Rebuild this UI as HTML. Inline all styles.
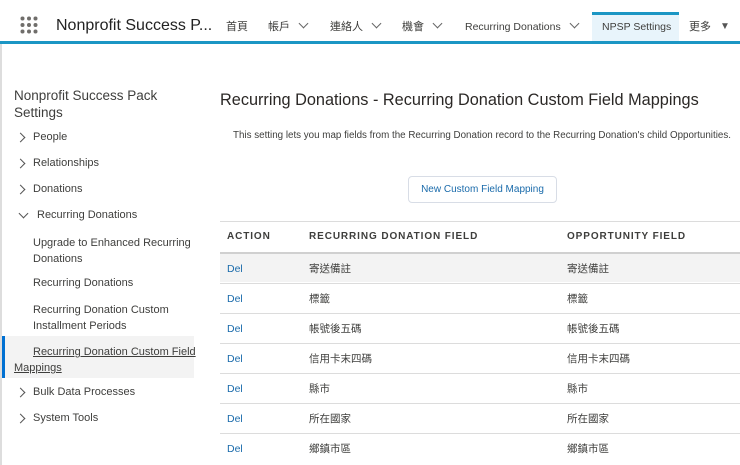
<!DOCTYPE html>
<html><head><meta charset="utf-8"><style>
*{margin:0;padding:0;box-sizing:border-box}
body{width:740px;height:465px;overflow:hidden;background:#fff;font-family:"Liberation Sans","Noto Sans CJK TC",sans-serif;color:#3e3e3c;position:relative}
.abs{position:absolute;white-space:nowrap}
.nav{position:absolute;left:0;top:0;width:740px;height:42px;background:#fff}
.bar{position:absolute;left:0;top:41px;width:740px;height:3px;background:#1b96c4}
.nv{position:absolute;top:20px;font-size:11px;line-height:14px;color:#3e3e3c}
.chev{display:inline-block;width:7px;height:7px;border-right:1.2px solid #666;border-bottom:1.2px solid #666;transform:rotate(45deg);margin-left:10px;position:relative;top:-3px}
.side{font-size:11px;color:#3e3e3c}
.rc{display:inline-block;width:7px;height:7px;border-right:1.2px solid #555;border-bottom:1.2px solid #555;transform:rotate(-45deg)}
.row{position:absolute;left:220px;width:520px;height:30px;border-top:1px solid #dcdcdc;font-size:10.5px}
.row span{position:absolute;top:8px;line-height:14px}
</style></head><body>
<div class="nav">
 <div class="abs" style="left:20px;top:16px;width:18px;height:18px">
  <svg width="18" height="18"><g fill="#706e6b">
  <circle cx="2.5" cy="2.5" r="2"/><circle cx="9" cy="2.5" r="2"/><circle cx="15.5" cy="2.5" r="2"/>
  <circle cx="2.5" cy="9" r="2"/><circle cx="9" cy="9" r="2"/><circle cx="15.5" cy="9" r="2"/>
  <circle cx="2.5" cy="15.5" r="2"/><circle cx="9" cy="15.5" r="2"/><circle cx="15.5" cy="15.5" r="2"/></g></svg>
 </div>
 <div class="abs" style="left:56px;top:17px;font-size:16px;color:#222">Nonprofit Success P...</div>
 <div class="nv" style="left:226px">首頁</div>
 <div class="nv" style="left:268px">帳戶<span class="chev"></span></div>
 <div class="nv" style="left:330px">連絡人<span class="chev"></span></div>
 <div class="nv" style="left:402px">機會<span class="chev"></span></div>
 <div class="nv" style="left:465px;font-size:10.5px">Recurring Donations<span class="chev"></span></div>
 <div class="abs" style="left:592px;top:12px;width:87px;height:30px;background:#e8f4fb;border-top:3px solid #1b96c4"></div>
 <div class="nv" style="left:602px;font-size:10.5px">NPSP Settings</div>
 <div class="nv" style="left:689px">更多</div>
 <div class="abs" style="left:720px;top:21px;font-size:10px;color:#555">▼</div>
</div>
<div class="bar"></div>
<div class="abs" style="left:0;top:44px;width:2px;height:421px;background:#ddd"></div>
<div class="abs" style="left:2px;top:336px;width:3px;height:42px;background:#0070d2"></div>
<div class="abs" style="left:5px;top:336px;width:189px;height:42px;background:#f3f3f3"></div>

<div class="abs" style="left:14px;top:87px;font-size:13.5px;line-height:17px;color:#3e3e3c;white-space:normal;width:180px">Nonprofit Success Pack Settings</div>
<div class="abs side" style="left:17px;top:132px"><span class="rc"></span></div><div class="abs side" style="left:33px;top:131px">People</div>
<div class="abs side" style="left:17px;top:158px"><span class="rc"></span></div><div class="abs side" style="left:33px;top:157px">Relationships</div>
<div class="abs side" style="left:17px;top:184px"><span class="rc"></span></div><div class="abs side" style="left:33px;top:183px">Donations</div>
<div class="abs side" style="left:20px;top:208px"><span class="rc" style="transform:rotate(45deg)"></span></div><div class="abs side" style="left:37px;top:209px">Recurring Donations</div>
<div class="abs side" style="left:33px;top:235px;line-height:16px">Upgrade to Enhanced Recurring<br>Donations</div>
<div class="abs side" style="left:33px;top:277px">Recurring Donations</div>
<div class="abs side" style="left:33px;top:302px;line-height:16px">Recurring Donation Custom<br>Installment Periods</div>
<div class="abs side" style="left:14px;top:344px;line-height:16px;text-decoration:underline"><span style="margin-left:19px">Recurring Donation Custom Field</span><br>Mappings</div>
<div class="abs side" style="left:17px;top:387px"><span class="rc"></span></div><div class="abs side" style="left:33px;top:386px">Bulk Data Processes</div>
<div class="abs side" style="left:17px;top:413px"><span class="rc"></span></div><div class="abs side" style="left:33px;top:412px">System Tools</div>

<div class="abs" style="left:220px;top:91px;font-size:16.3px;color:#2b2826">Recurring Donations - Recurring Donation Custom Field Mappings</div>
<div class="abs" style="left:233px;top:130px;font-size:9.8px;color:#3e3e3c">This setting lets you map fields from the Recurring Donation record to the Recurring Donation's child Opportunities.</div>
<div class="abs" style="left:408px;top:176px;width:149px;height:27px;border:1px solid #d8dde6;border-radius:4px;font-size:10px;color:#1a6bab;text-align:center;line-height:26px">New Custom Field Mapping</div>

<div class="abs" style="left:220px;top:221px;width:520px;height:1px;background:#dcdcdc"></div>
<div class="abs" style="left:227px;top:231px;font-size:10px;font-weight:bold;letter-spacing:0.9px;color:#3e3e3c">ACTION</div>
<div class="abs" style="left:309px;top:231px;font-size:10px;font-weight:bold;letter-spacing:0.9px;color:#3e3e3c">RECURRING DONATION FIELD</div>
<div class="abs" style="left:567px;top:231px;font-size:10px;font-weight:bold;letter-spacing:0.9px;color:#3e3e3c">OPPORTUNITY FIELD</div>

<div class="row" style="top:252px;background:#f3f3f3;border-top:2px solid #d0d0d0"><span style="left:7px;color:#1a6bab">Del</span><span style="left:89px">寄送備註</span><span style="left:347px">寄送備註</span></div>
<div class="row" style="top:283px"><span style="left:7px;color:#1a6bab">Del</span><span style="left:89px">標籤</span><span style="left:347px">標籤</span></div>
<div class="row" style="top:313px"><span style="left:7px;color:#1a6bab">Del</span><span style="left:89px">帳號後五碼</span><span style="left:347px">帳號後五碼</span></div>
<div class="row" style="top:343px"><span style="left:7px;color:#1a6bab">Del</span><span style="left:89px">信用卡末四碼</span><span style="left:347px">信用卡末四碼</span></div>
<div class="row" style="top:373px"><span style="left:7px;color:#1a6bab">Del</span><span style="left:89px">縣市</span><span style="left:347px">縣市</span></div>
<div class="row" style="top:403px"><span style="left:7px;color:#1a6bab">Del</span><span style="left:89px">所在國家</span><span style="left:347px">所在國家</span></div>
<div class="row" style="top:433px"><span style="left:7px;color:#1a6bab">Del</span><span style="left:89px">鄉鎮市區</span><span style="left:347px">鄉鎮市區</span></div>
</body></html>
